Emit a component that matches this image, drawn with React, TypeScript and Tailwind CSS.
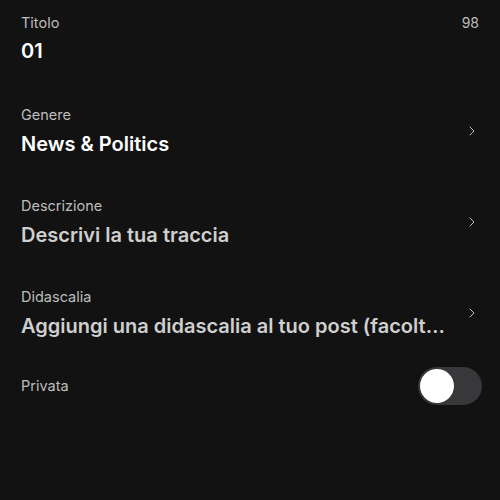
import { ChevronRight } from "lucide-react";

type Row = {
  label: string;
  value: string;
  placeholder?: boolean;
};

const rows: Row[] = [
  { label: "Genere", value: "News & Politics" },
  { label: "Descrizione", value: "Descrivi la tua traccia", placeholder: true },
  {
    label: "Didascalia",
    value: "Aggiungi una didascalia al tuo post (facoltativo)",
    placeholder: true,
  },
];

const App = () => {
  return (
    <div
      className="w-[500px] h-[500px] bg-[#121212] text-white overflow-hidden"
      style={{ fontFamily: "Inter, 'Noto Sans', sans-serif" }}
    >
      {/* titolo */}
      <div className="flex justify-between pl-[21px] pr-[21px] pt-[14px]">
        <div className="flex flex-col">
          <span className="text-[14.5px] leading-[18px] text-[#bdbdbd]">Titolo</span>
          <span className="mt-[7px] text-[20px] leading-[24px] font-semibold text-white">01</span>
        </div>
        <span className="text-[14px] leading-[18px] text-[#bdbdbd]">98</span>
      </div>

      <div className="flex flex-col mt-[43px] gap-[41px]">
        {rows.map((row) => (
          <div key={row.label} className="flex items-center pl-[21px] pr-[20px]">
            <div className="flex flex-col min-w-0 flex-1">
              <span className="text-[14.5px] leading-[18px] text-[#bdbdbd]">{row.label}</span>
              <span
                className={`mt-[8px] text-[20px] leading-[24px] font-semibold truncate max-w-[436px] ${
                  row.placeholder ? "text-[#cfcfcf]" : "text-white"
                }`}
              >
                {row.value}
              </span>
            </div>
            <ChevronRight className="w-4 h-4 text-[#bdbdbd] ml-2 mb-[1px]" strokeWidth={1.5} />
          </div>
        ))}
      </div>

      {/* privata */}
      <div className="flex items-center justify-between pl-[21px] pr-[18px] mt-[29px]">
        <span className="text-[14.5px] leading-[18px] text-[#bdbdbd]">Privata</span>
        <button className="relative w-[64px] h-[38px] rounded-full bg-[#38383a]">
          <span className="absolute left-[2px] top-[2px] w-[34px] h-[34px] rounded-full bg-white" />
        </button>
      </div>
    </div>
  );
};

export default App;
